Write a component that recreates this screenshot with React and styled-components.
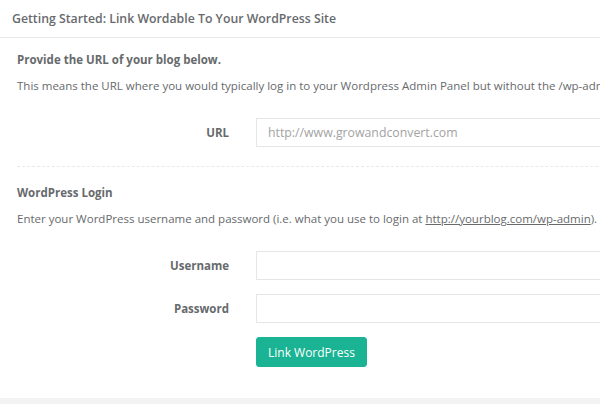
import styled, { createGlobalStyle } from "styled-components";

const GlobalStyle = createGlobalStyle`
  html, body {
    margin: 0;
    padding: 0;
    background: #fff;
    overflow: hidden;
  }
  body {
    font-family: "Open Sans", "Liberation Sans", sans-serif;
    color: #676a6c;
  }
`;

const Page = styled.div`
  width: 600px;
  height: 404px;
  display: flex;
  flex-direction: column;
  background: #f3f3f4;
`;

const Box = styled.div`
  background: #fff;
  height: 398px;
  width: 720px;
`;

const Title = styled.div`
  height: 38px;
  box-sizing: border-box;
  border-bottom: 1px solid #e7eaec;
  padding: 0 12px;
  display: flex;
  align-items: center;
  font-size: 12.3px;
  font-weight: 600;
  color: #676a6c;
`;

const Content = styled.div`
  padding: 0 17px;
`;

const Section = styled.div`
  padding-top: ${(p) => p.$top}px;
  padding-bottom: ${(p) => p.$bottom}px;
  border-bottom: ${(p) => (p.$dashed ? "1px dashed #e7eaec" : "none")};
`;

const Heading = styled.div`
  font-size: 11.5px;
  font-weight: 700;
  line-height: 16px;
  color: #676a6c;
`;

const Text = styled.p`
  margin: 10px 0 0;
  font-size: 11.5px;
  line-height: 16px;
  white-space: nowrap;
  a {
    color: #676a6c;
    text-decoration: underline;
  }
`;

const Row = styled.div`
  display: flex;
  align-items: center;
  gap: 27px;
  margin-top: ${(p) => p.$top}px;
`;

const Label = styled.label`
  width: 212px;
  text-align: right;
  font-size: 11.5px;
  font-weight: 700;
  color: #676a6c;
`;

const Input = styled.input`
  flex: 1;
  height: 29px;
  box-sizing: border-box;
  border: 1px solid #e5e6e7;
  padding: 0 11px;
  font-family: inherit;
  font-size: 12.3px;
  color: #676a6c;
  outline: none;
  &::placeholder {
    color: #a3a3a3;
  }
`;

const Button = styled.button`
  margin-left: 239px;
  margin-top: 14px;
  height: 30px;
  padding: 0 11px;
  background: #1ab394;
  border: 1px solid #1ab394;
  border-radius: 3px;
  color: #fff;
  font-family: inherit;
  font-size: 12px;
`;

export default function App() {
  return (
    <Page>
      <GlobalStyle />
      <Box>
        <Title>Getting Started: Link Wordable To Your WordPress Site</Title>
        <Content>
          <Section $top={14} $bottom={19} $dashed>
            <Heading>Provide the URL of your blog below.</Heading>
            <Text>
              This means the URL where you would typically log in to your
              Wordpress Admin Panel but without the /wp-admin
            </Text>
            <Row $top={24}>
              <Label>URL</Label>
              <Input placeholder="http://www.growandconvert.com" />
            </Row>
          </Section>
          <Section $top={18} $bottom={0}>
            <Heading>WordPress Login</Heading>
            <Text>
              Enter your WordPress username and password (i.e. what you use to
              login at <a href="#">http://yourblog.com/wp-admin</a>).
            </Text>
            <Row $top={24}>
              <Label>Username</Label>
              <Input />
            </Row>
            <Row $top={14}>
              <Label>Password</Label>
              <Input type="password" />
            </Row>
            <Button>Link WordPress</Button>
          </Section>
        </Content>
      </Box>
    </Page>
  );
}
